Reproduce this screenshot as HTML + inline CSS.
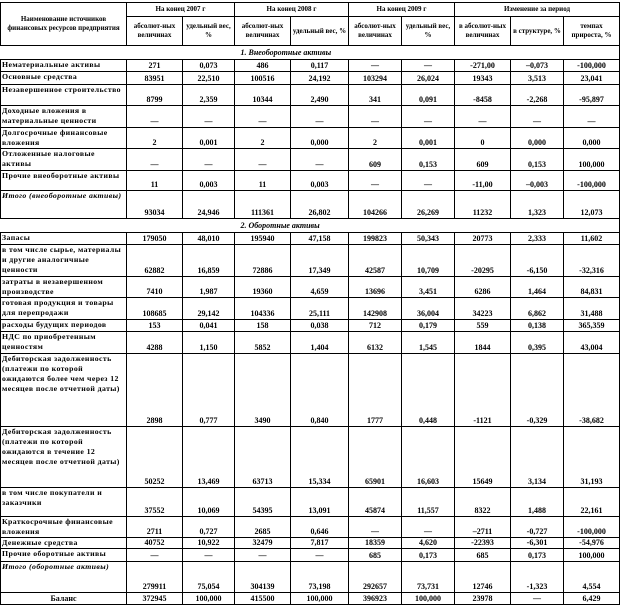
<!DOCTYPE html><html><head><meta charset="utf-8"><style>
body{margin:0;background:#fff;width:620px;height:600px;overflow:hidden}
table{position:absolute;left:0;top:2px;border-collapse:collapse;table-layout:fixed;width:619px;font-family:"Liberation Serif","DejaVu Serif",serif;font-size:8px;font-weight:bold;line-height:10px;color:#000}
td{border:1px solid #000;padding:0 1px;text-align:center;vertical-align:bottom;overflow:hidden;white-space:nowrap}
td.l{text-align:left;vertical-align:top;white-space:normal;font-size:7.8px;letter-spacing:.4px;line-height:10px}
tr.s td{border-left:none;border-right:1px solid #000;font-style:italic;text-align:left;padding-left:240px;vertical-align:middle}
.h td{vertical-align:middle;font-size:7px;line-height:9px;white-space:normal}
i{font-style:italic}
</style></head><body>
<table>
<colgroup><col style="width:126px"><col style="width:56px"><col style="width:52px"><col style="width:56px"><col style="width:58px"><col style="width:53px"><col style="width:53px"><col style="width:56px"><col style="width:53px"><col style="width:56px"></colgroup>
<tr class="h" style="height:14px"><td rowspan="2">Наименование источников финансовых ресурсов предприятия</td><td colspan="2">На конец 2007 г</td><td colspan="2">На конец 2008 г</td><td colspan="2">На конец 2009 г</td><td colspan="3">Изменение за период</td></tr>
<tr class="h" style="height:29px"><td>абсолют-ных величинах</td><td>удельный вес, %</td><td>абсолют-ных величинах</td><td>удельный вес, %</td><td>абсолют-ных величинах</td><td>удельный вес, %</td><td>в абсолют-ных величинах</td><td>в структуре, %</td><td>темпах прироста, %</td></tr>
<tr class="s" style="height:14px"><td colspan="10">1. Внеоборотные активы</td></tr>
<tr style="height:12px"><td class="l">Нематериальные активы</td><td>271</td><td>0,073</td><td>486</td><td>0,117</td><td>—</td><td>—</td><td>-271,00</td><td>–0,073</td><td>-100,000</td></tr>
<tr style="height:13px"><td class="l">Основные средства</td><td>83951</td><td>22,510</td><td>100516</td><td>24,192</td><td>103294</td><td>26,024</td><td>19343</td><td>3,513</td><td>23,041</td></tr>
<tr style="height:21px"><td class="l">Незавершенное строительство</td><td>8799</td><td>2,359</td><td>10344</td><td>2,490</td><td>341</td><td>0,091</td><td>-8458</td><td>-2,268</td><td>-95,897</td></tr>
<tr style="height:22px"><td class="l">Доходные вложения в материальные ценности</td><td>—</td><td>—</td><td>—</td><td>—</td><td>—</td><td>—</td><td>—</td><td>—</td><td>—</td></tr>
<tr style="height:20px"><td class="l">Долгосрочные финансовые вложения</td><td>2</td><td>0,001</td><td>2</td><td>0,000</td><td>2</td><td>0,001</td><td>0</td><td>0,000</td><td>0,000</td></tr>
<tr style="height:22px"><td class="l">Отложенные налоговые активы</td><td>—</td><td>—</td><td>—</td><td>—</td><td>609</td><td>0,153</td><td>609</td><td>0,153</td><td>100,000</td></tr>
<tr style="height:20px"><td class="l">Прочие внеоборотные активы</td><td>11</td><td>0,003</td><td>11</td><td>0,003</td><td>—</td><td>—</td><td>-11,00</td><td>–0,003</td><td>-100,000</td></tr>
<tr style="height:28px"><td class="l"><i>Итого (внеоборотные активы)</i></td><td>93034</td><td>24,946</td><td>111361</td><td>26,802</td><td>104266</td><td>26,269</td><td>11232</td><td>1,323</td><td>12,073</td></tr>
<tr class="s" style="height:14px"><td colspan="10">2. Оборотные активы</td></tr>
<tr style="height:12px"><td class="l">Запасы</td><td>179050</td><td>48,010</td><td>195940</td><td>47,158</td><td>199823</td><td>50,343</td><td>20773</td><td>2,333</td><td>11,602</td></tr>
<tr style="height:32px"><td class="l">в том числе сырье, материалы и другие аналогичные ценности</td><td>62882</td><td>16,859</td><td>72886</td><td>17,349</td><td>42587</td><td>10,709</td><td>-20295</td><td>-6,150</td><td>-32,316</td></tr>
<tr style="height:20px"><td class="l">затраты в незавершенном производстве</td><td>7410</td><td>1,987</td><td>19360</td><td>4,659</td><td>13696</td><td>3,451</td><td>6286</td><td>1,464</td><td>84,831</td></tr>
<tr style="height:22px"><td class="l">готовая продукция и товары для перепродажи</td><td>108685</td><td>29,142</td><td>104336</td><td>25,111</td><td>142908</td><td>36,004</td><td>34223</td><td>6,862</td><td>31,488</td></tr>
<tr style="height:12px"><td class="l">расходы будущих периодов</td><td>153</td><td>0,041</td><td>158</td><td>0,038</td><td>712</td><td>0,179</td><td>559</td><td>0,138</td><td>365,359</td></tr>
<tr style="height:22px"><td class="l">НДС по приобретенным ценностям</td><td>4288</td><td>1,150</td><td>5852</td><td>1,404</td><td>6132</td><td>1,545</td><td>1844</td><td>0,395</td><td>43,004</td></tr>
<tr style="height:73px"><td class="l">Дебиторская задолженность (платежи по которой ожидаются более чем через 12 месяцев после отчетной даты)</td><td>2898</td><td>0,777</td><td>3490</td><td>0,840</td><td>1777</td><td>0,448</td><td>-1121</td><td>-0,329</td><td>-38,682</td></tr>
<tr style="height:61px"><td class="l">Дебиторская задолженность (платежи по которой ожидаются в течение 12 месяцев после отчетной даты)</td><td>50252</td><td>13,469</td><td>63713</td><td>15,334</td><td>65901</td><td>16,603</td><td>15649</td><td>3,134</td><td>31,193</td></tr>
<tr style="height:29px"><td class="l">в том числе покупатели и заказчики</td><td>37552</td><td>10,069</td><td>54395</td><td>13,091</td><td>45874</td><td>11,557</td><td>8322</td><td>1,488</td><td>22,161</td></tr>
<tr style="height:17px"><td class="l">Краткосрочные финансовые вложения</td><td>2711</td><td>0,727</td><td>2685</td><td>0,646</td><td>—</td><td>—</td><td>–2711</td><td>-0,727</td><td>-100,000</td></tr>
<tr style="height:11px"><td class="l">Денежные средства</td><td>40752</td><td>10,922</td><td>32479</td><td>7,817</td><td>18359</td><td>4,620</td><td>-22393</td><td>-6,301</td><td>-54,976</td></tr>
<tr style="height:13px"><td class="l">Прочие оборотные активы</td><td>—</td><td>—</td><td>—</td><td>—</td><td>685</td><td>0,173</td><td>685</td><td>0,173</td><td>100,000</td></tr>
<tr style="height:31px"><td class="l"><i>Итого (оборотные активы)</i></td><td>279911</td><td>75,054</td><td>304139</td><td>73,198</td><td>292657</td><td>73,731</td><td>12746</td><td>-1,323</td><td>4,554</td></tr>
<tr style="height:12px"><td style="text-align:center">Баланс</td><td>372945</td><td>100,000</td><td>415500</td><td>100,000</td><td>396923</td><td>100,000</td><td>23978</td><td>—</td><td>6,429</td></tr>
</table>
</body></html>
